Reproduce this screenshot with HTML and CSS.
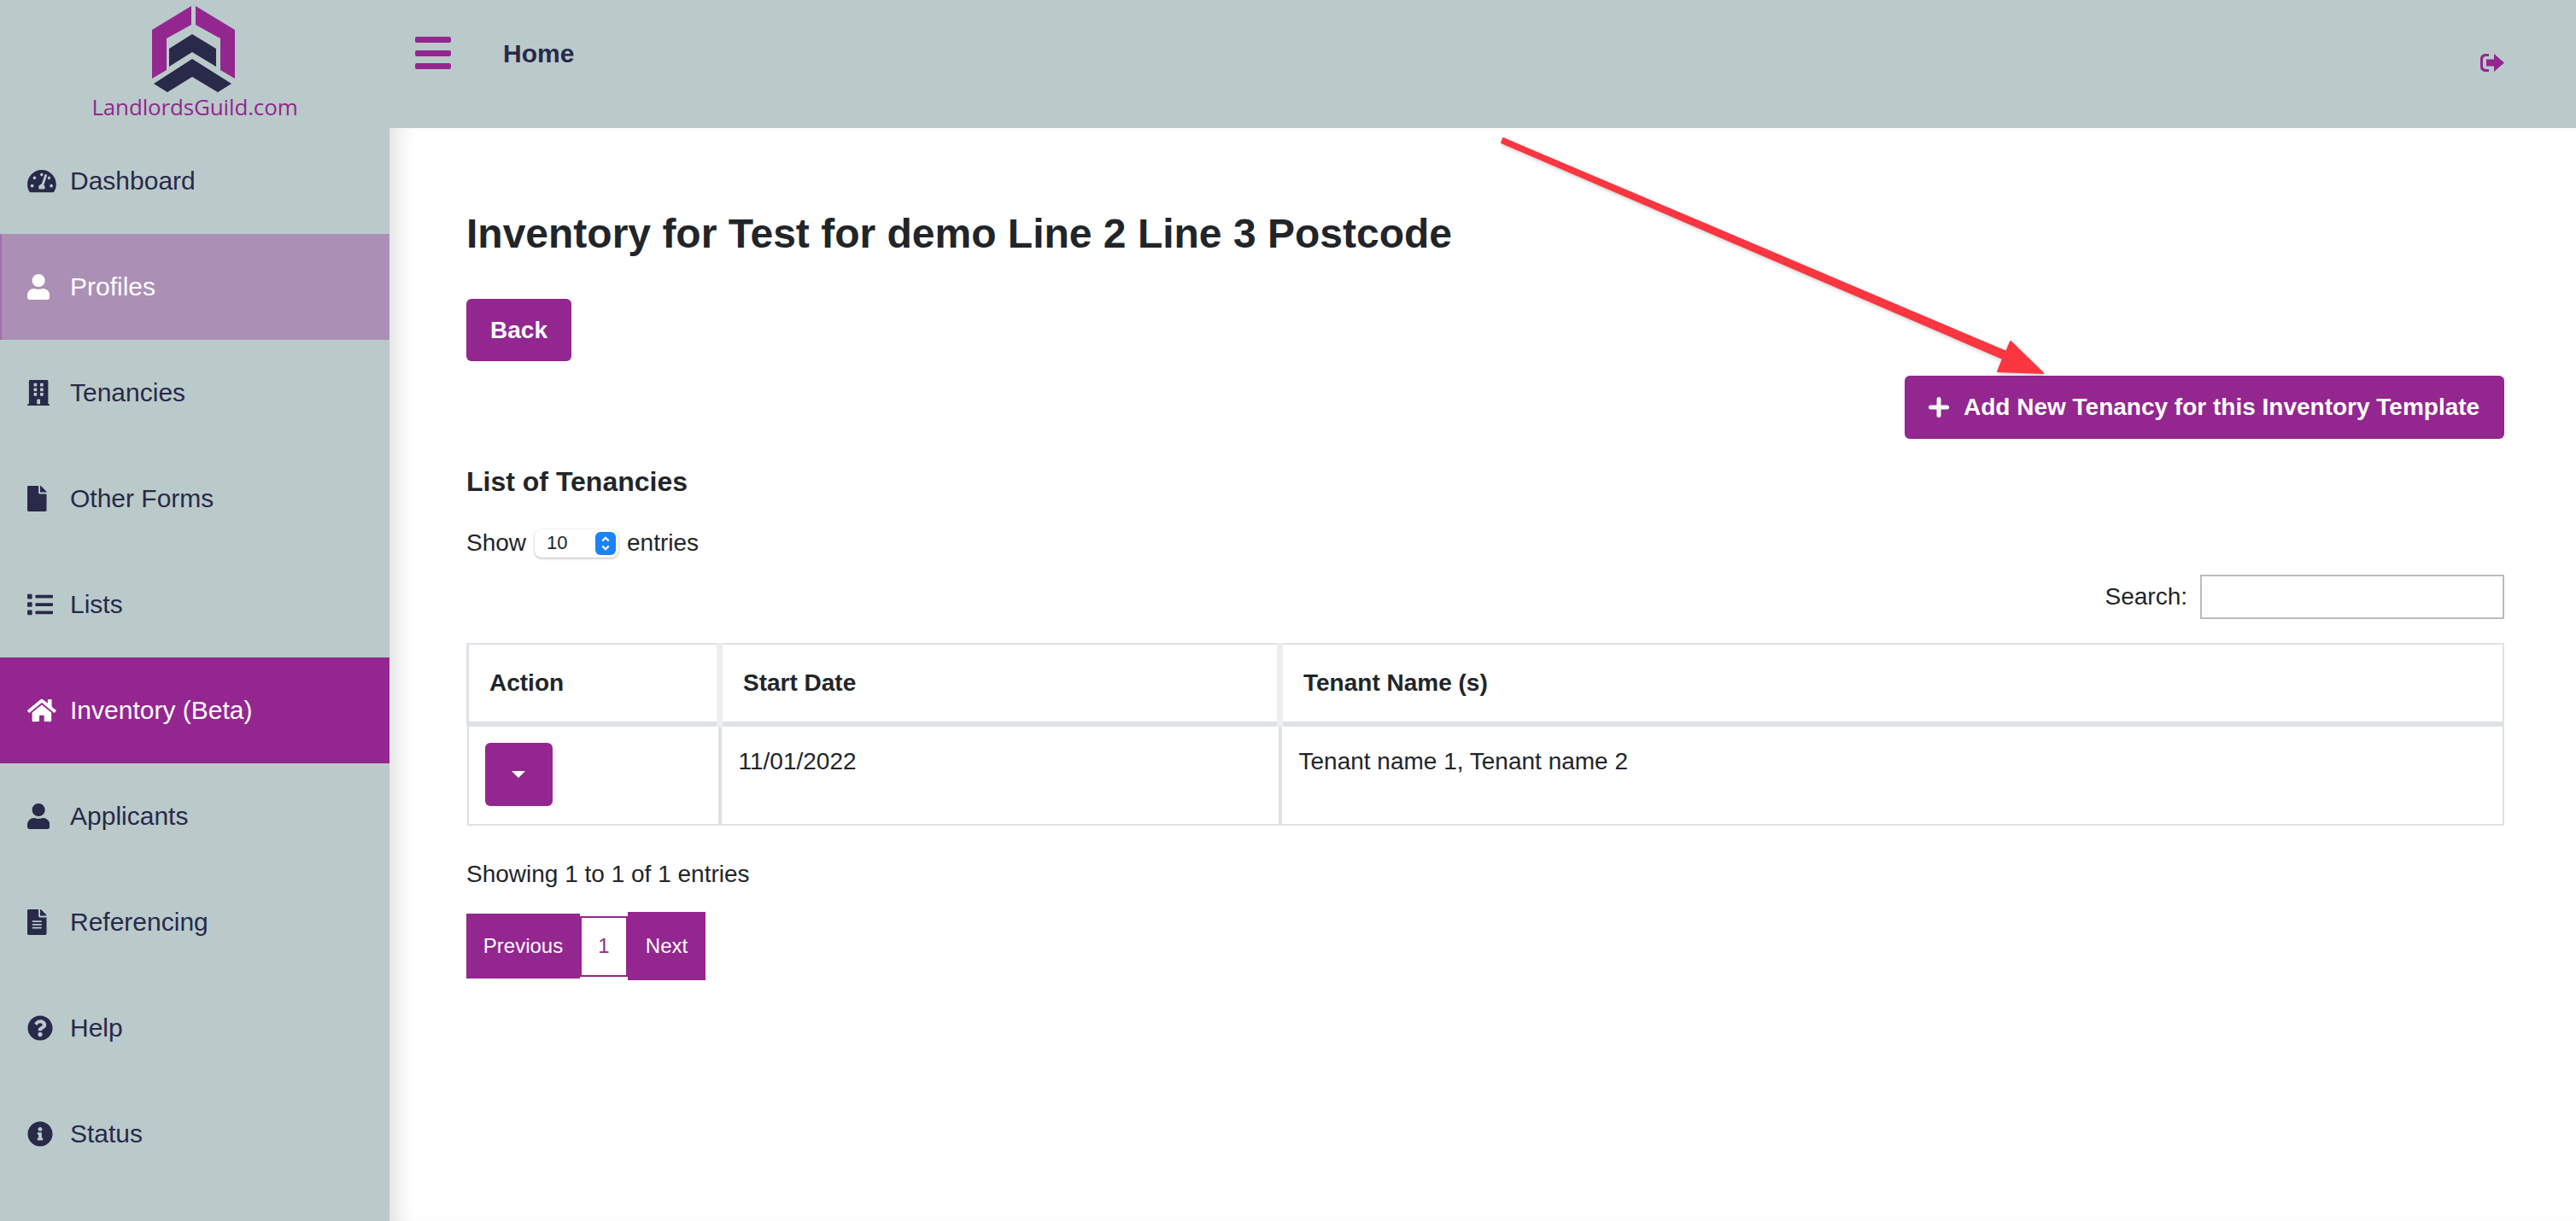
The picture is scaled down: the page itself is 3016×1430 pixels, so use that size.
FILE: index.html
```html
<!DOCTYPE html>
<html lang="en">
<head>
    <meta charset="UTF-8">
    <meta name="viewport" content="width=device-width, initial-scale=1.0">
    <title>Inventory</title>
    <link rel="stylesheet" href="styles.css">
</head>
<body>
    <div class="page">
        <aside class="sidebar">
            <div class="brand">
                <svg class="brand-mark" viewBox="0 0 98 101">
                    <path class="mark-purple" d="M46 0V22L17 38V75L0 85V28Z"/>
                    <path class="mark-purple" d="M51 0L97 28V85L80 75V38L51 22Z"/>
                    <path class="mark-navy" d="M47 33L75 50V71L47 54L20 71V50Z"/>
                    <path class="mark-navy" d="M47 62L93 91L77 101L47 83L18 101L2 91Z"/>
                </svg>
                <div class="brand-name">LandlordsGuild.com</div>
            </div>
            <nav class="nav">
                <a class="nav-item">
                    <span class="nav-icon"><svg viewBox="0 0 576 512"><path d="M288 32C128.94 32 0 160.94 0 320c0 52.8 14.25 102.26 39.06 144.8 5.61 9.62 16.3 15.2 27.44 15.2h443c11.14 0 21.83-5.58 27.44-15.2C561.75 422.26 576 372.8 576 320c0-159.06-128.94-288-288-288zm0 64c14.71 0 26.58 10.13 30.32 23.65-1.11 2.26-2.64 4.23-3.45 6.67l-9.22 27.67c-5.13 3.49-10.97 6.01-17.64 6.01-17.67 0-32-14.33-32-32S270.33 96 288 96zM96 384c-17.67 0-32-14.33-32-32s14.33-32 32-32 32 14.33 32 32-14.33 32-32 32zm48-160c-17.67 0-32-14.33-32-32s14.33-32 32-32 32 14.33 32 32-14.33 32-32 32zm246.77-72.41l-61.33 184C343.13 347.33 352 364.54 352 384c0 11.72-3.38 22.55-8.88 32H232.88c-5.5-9.45-8.88-20.28-8.88-32 0-33.94 26.5-61.43 59.9-63.59l61.34-184.01c4.17-12.56 17.73-19.45 30.36-15.17 12.57 4.19 19.35 17.79 15.17 30.36zm14.66 57.2l15.52-46.55c3.47-1.29 7.13-2.23 11.05-2.23 17.67 0 32 14.33 32 32s-14.33 32-32 32c-11.38-.01-20.89-6.28-26.57-15.22zM480 384c-17.67 0-32-14.33-32-32s14.33-32 32-32 32 14.33 32 32-14.33 32-32 32z"/></svg></span>
                    Dashboard
                </a>
                <a class="nav-item nav-item-hover">
                    <span class="nav-icon"><svg viewBox="0 0 448 512"><path d="M224 256c70.7 0 128-57.3 128-128S294.7 0 224 0 96 57.3 96 128s57.3 128 128 128zm89.6 32h-16.7c-22.2 10.2-46.9 16-72.9 16s-50.6-5.8-72.9-16h-16.7C60.2 288 0 348.2 0 422.4V464c0 26.5 21.5 48 48 48h352c26.5 0 48-21.5 48-48v-41.6c0-74.2-60.2-134.4-134.4-134.4z"/></svg></span>
                    Profiles
                </a>
                <a class="nav-item">
                    <span class="nav-icon"><svg viewBox="0 0 448 512"><path d="M436 480h-20V24c0-13.255-10.745-24-24-24H56C42.745 0 32 10.745 32 24v456H12c-6.627 0-12 5.373-12 12v20h448v-20c0-6.627-5.373-12-12-12zM128 76c0-6.627 5.373-12 12-12h40c6.627 0 12 5.373 12 12v40c0 6.627-5.373 12-12 12h-40c-6.627 0-12-5.373-12-12V76zm0 96c0-6.627 5.373-12 12-12h40c6.627 0 12 5.373 12 12v40c0 6.627-5.373 12-12 12h-40c-6.627 0-12-5.373-12-12v-40zm52 148h-40c-6.627 0-12-5.373-12-12v-40c0-6.627 5.373-12 12-12h40c6.627 0 12 5.373 12 12v40c0 6.627-5.373 12-12 12zm76 160h-64v-84c0-6.627 5.373-12 12-12h40c6.627 0 12 5.373 12 12v84zm64-172c0 6.627-5.373 12-12 12h-40c-6.627 0-12-5.373-12-12v-40c0-6.627 5.373-12 12-12h40c6.627 0 12 5.373 12 12v40zm0-96c0 6.627-5.373 12-12 12h-40c-6.627 0-12-5.373-12-12v-40c0-6.627 5.373-12 12-12h40c6.627 0 12 5.373 12 12v40zm0-96c0 6.627-5.373 12-12 12h-40c-6.627 0-12-5.373-12-12V76c0-6.627 5.373-12 12-12h40c6.627 0 12 5.373 12 12v40z"/></svg></span>
                    Tenancies
                </a>
                <a class="nav-item">
                    <span class="nav-icon"><svg viewBox="0 0 384 512"><path d="M224 136V0H24C10.7 0 0 10.7 0 24v464c0 13.3 10.7 24 24 24h336c13.3 0 24-10.7 24-24V160H248c-13.2 0-24-10.8-24-24zm160-14.1v6.1H256V0h6.1c6.4 0 12.5 2.5 17 7l97.9 98c4.5 4.5 7 10.6 7 16.9z"/></svg></span>
                    Other Forms
                </a>
                <a class="nav-item">
                    <span class="nav-icon"><svg viewBox="0 0 512 512"><path d="M80 368H16a16 16 0 0 0-16 16v64a16 16 0 0 0 16 16h64a16 16 0 0 0 16-16v-64a16 16 0 0 0-16-16zm0-320H16A16 16 0 0 0 0 64v64a16 16 0 0 0 16 16h64a16 16 0 0 0 16-16V64a16 16 0 0 0-16-16zm0 160H16a16 16 0 0 0-16 16v64a16 16 0 0 0 16 16h64a16 16 0 0 0 16-16v-64a16 16 0 0 0-16-16zm416 176H176a16 16 0 0 0-16 16v32a16 16 0 0 0 16 16h320a16 16 0 0 0 16-16v-32a16 16 0 0 0-16-16zm0-320H176a16 16 0 0 0-16 16v32a16 16 0 0 0 16 16h320a16 16 0 0 0 16-16V80a16 16 0 0 0-16-16zm0 160H176a16 16 0 0 0-16 16v32a16 16 0 0 0 16 16h320a16 16 0 0 0 16-16v-32a16 16 0 0 0-16-16z"/></svg></span>
                    Lists
                </a>
                <a class="nav-item nav-item-active">
                    <span class="nav-icon"><svg viewBox="0 0 576 512"><path d="M280.37 148.26L96 300.11V464a16 16 0 0 0 16 16l112.06-.29a16 16 0 0 0 15.92-16V368a16 16 0 0 1 16-16h64a16 16 0 0 1 16 16v95.64a16 16 0 0 0 16 16.05L464 480a16 16 0 0 0 16-16V300L295.67 148.26a12.19 12.19 0 0 0-15.3 0zM571.6 251.47L488 182.56V44.05a12 12 0 0 0-12-12h-56a12 12 0 0 0-12 12v72.61L318.47 43a48 48 0 0 0-61 0L4.34 251.47a12 12 0 0 0-1.6 16.9l25.5 31A12 12 0 0 0 45.15 301l235.22-193.74a12.19 12.19 0 0 1 15.3 0L530.9 301a12 12 0 0 0 16.9-1.6l25.5-31a12 12 0 0 0-1.7-16.93z"/></svg></span>
                    Inventory (Beta)
                </a>
                <a class="nav-item">
                    <span class="nav-icon"><svg viewBox="0 0 448 512"><path d="M224 256c70.7 0 128-57.3 128-128S294.7 0 224 0 96 57.3 96 128s57.3 128 128 128zm89.6 32h-16.7c-22.2 10.2-46.9 16-72.9 16s-50.6-5.8-72.9-16h-16.7C60.2 288 0 348.2 0 422.4V464c0 26.5 21.5 48 48 48h352c26.5 0 48-21.5 48-48v-41.6c0-74.2-60.2-134.4-134.4-134.4z"/></svg></span>
                    Applicants
                </a>
                <a class="nav-item">
                    <span class="nav-icon"><svg viewBox="0 0 384 512"><path d="M224 136V0H24C10.7 0 0 10.7 0 24v464c0 13.3 10.7 24 24 24h336c13.3 0 24-10.7 24-24V160H248c-13.2 0-24-10.8-24-24zm64 236c0 6.6-5.4 12-12 12H108c-6.6 0-12-5.4-12-12v-8c0-6.6 5.4-12 12-12h168c6.6 0 12 5.4 12 12v8zm0-64c0 6.6-5.4 12-12 12H108c-6.6 0-12-5.4-12-12v-8c0-6.6 5.4-12 12-12h168c6.6 0 12 5.4 12 12v8zm0-72v8c0 6.6-5.4 12-12 12H108c-6.6 0-12-5.4-12-12v-8c0-6.6 5.4-12 12-12h168c6.6 0 12 5.4 12 12zm96-114.1v6.1H256V0h6.1c6.4 0 12.5 2.5 17 7l97.9 98c4.5 4.5 7 10.6 7 16.9z"/></svg></span>
                    Referencing
                </a>
                <a class="nav-item">
                    <span class="nav-icon"><svg viewBox="0 0 512 512"><path d="M504 256c0 136.997-111.043 248-248 248S8 392.997 8 256C8 119.083 119.043 8 256 8s248 111.083 248 248zM262.655 90c-54.497 0-89.255 22.957-116.549 63.758-3.536 5.286-2.353 12.415 2.715 16.258l34.699 26.31c5.205 3.947 12.621 3.008 16.665-2.122 17.864-22.658 30.113-35.797 57.303-35.797 20.429 0 45.698 13.148 45.698 32.958 0 14.976-12.363 22.667-32.534 33.976C247.128 238.528 216 254.941 216 296v4c0 6.627 5.373 12 12 12h56c6.627 0 12-5.373 12-12v-1.333c0-28.462 83.186-29.647 83.186-106.667 0-58.002-60.165-102-116.531-102zM256 338c-25.365 0-46 20.635-46 46 0 25.364 20.635 46 46 46s46-20.636 46-46c0-25.365-20.635-46-46-46z"/></svg></span>
                    Help
                </a>
                <a class="nav-item">
                    <span class="nav-icon"><svg viewBox="0 0 512 512"><path d="M256 8C119.043 8 8 119.083 8 256c0 136.997 111.043 248 248 248s248-111.003 248-248C504 119.083 392.957 8 256 8zm0 110c23.196 0 42 18.804 42 42s-18.804 42-42 42-42-18.804-42-42 18.804-42 42-42zm56 254c0 6.627-5.373 12-12 12h-88c-6.627 0-12-5.373-12-12v-24c0-6.627 5.373-12 12-12h12v-64h-12c-6.627 0-12-5.373-12-12v-24c0-6.627 5.373-12 12-12h64c6.627 0 12 5.373 12 12v100h12c6.627 0 12 5.373 12 12v24z"/></svg></span>
                    Status
                </a>
            </nav>
        </aside>

        <div class="main">
            <header class="topbar">
                <div class="topbar-left">
                    <div class="burger"><span></span><span></span><span></span></div>
                    <div class="topbar-title">Home</div>
                </div>
                <svg class="logout" viewBox="0 0 28 21"><path d="M10 0H6C2.5 0 0 2.5 0 6V15C0 18.500 2.500 21 6 21H10V18H6.500C4.500 18 3 16.500 3 14.500V6.500C3 4.500 4.500 3 6.500 3H10Z"/><path d="M7 6.500H16V0L28 10.500L16 21V14.500H7Z"/></svg>
            </header>

            <main class="content">
                <h1 class="page-title">Inventory for Test for demo Line 2 Line 3 Postcode</h1>
                <button class="btn btn-back">Back</button>
                <div class="add-row">
                    <button class="btn btn-add"><svg class="plus" viewBox="0 0 24 24"><path d="M12 2.500V21.500M2.500 12H21.500"/></svg>Add New Tenancy for this Inventory Template</button>
                </div>

                <h2 class="section-title">List of Tenancies</h2>
                <div class="length-row">
                    Show
                    <span class="fake-select">10
                        <span class="select-arrows"><svg viewBox="0 0 24 36"><path d="M7 14L12 9L17 14M7 22L12 27L17 22"/></svg></span>
                    </span>
                    entries
                </div>
                <div class="search-row">
                    <label for="search">Search:</label>
                    <input type="text" id="search">
                </div>

                <table class="data-table">
                    <thead>
                        <tr>
                            <th class="col-action">Action</th>
                            <th class="col-date">Start Date</th>
                            <th>Tenant Name (s)</th>
                        </tr>
                    </thead>
                    <tbody>
                        <tr>
                            <td class="cell-action"><button class="btn-caret"><span class="caret"></span></button></td>
                            <td>11/01/2022</td>
                            <td>Tenant name 1, Tenant name 2</td>
                        </tr>
                    </tbody>
                </table>

                <div class="table-info">Showing 1 to 1 of 1 entries</div>
                <div class="pager">
                    <a class="page-prev">Previous</a>
                    <a class="page-num">1</a>
                    <a class="page-next">Next</a>
                </div>
            </main>
        </div>
    </div>

    <!-- red annotation arrow drawn over the page -->
    <svg class="arrow" viewBox="0 0 3016 1430">
        <path class="arrow-shape" d="M1760 162L2349 412L2354 400L2392 437L2339 435L2345 420L1758 167Z"/>
    </svg>
</body>
</html>
```

FILE: styles.css
```css
* {
    box-sizing: border-box;
}
html, body {
    margin: 0;
    height: 100%;
}
body {
    font-family: "Liberation Sans", Arial, sans-serif;
    font-size: 28px;
    color: #212529;
    background-color: #fff;
    overflow: hidden;
}
.page {
    display: flex;
    height: 1430px;
}

/* sidebar */
.sidebar {
    width: 456px;
    flex-shrink: 0;
    background-color: #bacaca;
}
.brand {
    height: 150px;
    padding-top: 7px;
    display: flex;
    flex-direction: column;
    align-items: center;
}
.brand-mark {
    width: 98px;
    height: 101px;
    display: block;
    margin-left: -2px;
}
.mark-purple {
    fill: #93278f;
}
.mark-navy {
    fill: #29294a;
}
.brand-name {
    font-family: "Open Sans", sans-serif;
    font-size: 26px;
    line-height: 32px;
    margin-top: 1px;
    letter-spacing: -0.15px;
    color: #93278f;
}
.nav-item {
    display: flex;
    align-items: center;
    height: 124px;
    padding-left: 32px;
    font-size: 30px;
    color: #29294a;
}
.nav-icon {
    width: 50px;
    flex-shrink: 0;
    display: flex;
}
.nav-icon svg {
    height: 30px;
    fill: currentColor;
}
.nav-item-hover {
    background-color: #ab8fb4;
    border-left: 2px solid #a56db0;
    padding-left: 30px;
    color: #fff;
}
.nav-item-active {
    background-color: #93278f;
    color: #fff;
}

/* top bar */
.main {
    flex: 1;
    min-width: 0;
    display: flex;
    flex-direction: column;
}
.topbar {
    height: 150px;
    flex-shrink: 0;
    background-color: #bacaca;
    display: flex;
    justify-content: space-between;
    padding: 43px 84px 0 30px;
}
.topbar-left {
    display: flex;
}
.burger {
    width: 42px;
    height: 38px;
    display: flex;
    flex-direction: column;
    justify-content: space-between;
}
.burger span {
    display: block;
    height: 7px;
    background-color: #93278f;
    border-radius: 2px;
}
.topbar-title {
    margin-left: 61px;
    font-size: 30px;
    font-weight: bold;
    line-height: 34px;
    margin-top: 3px;
    color: #29294a;
}
.logout {
    width: 28px;
    height: 21px;
    margin-top: 20px;
    fill: #93278f;
}

/* content */
.content {
    flex: 1;
    padding: 95px 84px 0 90px;
    box-shadow: inset 22px 0 22px -14px rgba(0, 0, 0, 0.13);
}
.page-title {
    margin: 0;
    font-size: 48px;
    line-height: 58px;
    font-weight: bold;
}
.btn {
    display: block;
    border: none;
    border-radius: 6px;
    background-color: #93278f;
    color: #fff;
    font-family: inherit;
    font-size: 28px;
    font-weight: bold;
}
.btn-back {
    width: 123px;
    height: 73px;
    margin-top: 47px;
}
.add-row {
    display: flex;
    justify-content: flex-end;
    margin-top: 17px;
}
.btn-add {
    width: 702px;
    height: 74px;
    display: flex;
    align-items: center;
    padding-left: 28px;
}
.plus {
    width: 24px;
    height: 24px;
    margin-right: 17px;
    fill: none;
    stroke: #fff;
    stroke-width: 5;
    stroke-linecap: round;
}
.section-title {
    margin: 31px 0 0;
    font-size: 32px;
    line-height: 38px;
    font-weight: bold;
}
.length-row {
    display: flex;
    align-items: center;
    gap: 10px;
    margin-top: 35px;
    height: 36px;
}
.fake-select {
    width: 98px;
    height: 33px;
    border-radius: 8px;
    background-color: #fff;
    box-shadow: 0 1px 3px rgba(0, 0, 0, 0.3);
    font-size: 22px;
    padding-left: 14px;
    display: flex;
    align-items: center;
    justify-content: space-between;
}
.select-arrows {
    width: 24px;
    height: 27px;
    margin-right: 3px;
    border-radius: 6px;
    background-color: #1b82fb;
    display: flex;
}
.select-arrows svg {
    width: 24px;
    height: 27px;
    fill: none;
    stroke: #fff;
    stroke-width: 3;
}
.search-row {
    display: flex;
    justify-content: flex-end;
    align-items: center;
    gap: 15px;
    margin-top: 19px;
}
.search-row input {
    width: 356px;
    height: 52px;
    border: 2px solid #bbb;
    background-color: #fff;
}
.data-table {
    width: 100%;
    margin-top: 28px;
    border-collapse: collapse;
    table-layout: fixed;
}
.data-table th {
    height: 94px;
    padding: 0 24px;
    text-align: left;
    font-size: 28px;
    border: 2px solid #dee2e6;
    border-bottom-width: 6px;
    border-left: 7px solid #eee;
    border-right: 7px solid #eee;
    border-top: 2px solid #dee2e6;
}
.data-table th:first-child {
    border-left: 3px solid #dee2e6;
}
.data-table th:last-child {
    border-right: 2px solid #dee2e6;
}
.data-table td {
    height: 118px;
    padding: 25px 20px 0;
    vertical-align: top;
    border: 4px solid #dee2e6;
    border-top: 6px solid #dee2e6;
    border-bottom: 2px solid #dee2e6;
}
.data-table td:first-child {
    border-left: 2px solid #dee2e6;
}
.data-table td:last-child {
    border-right: 2px solid #dee2e6;
}
.col-action {
    width: 295px;
}
.col-date {
    width: 656px;
}
.data-table td.cell-action {
    padding: 19px 0 0 19px;
}
.btn-caret {
    display: flex;
    align-items: center;
    justify-content: center;
    width: 79px;
    height: 74px;
    border: none;
    border-radius: 6px;
    background-color: #93278f;
    padding: 0;
}
.caret {
    width: 0;
    height: 0;
    border-left: 8px solid transparent;
    border-right: 8px solid transparent;
    border-top: 8px solid #fff;
}
.table-info {
    margin-top: 40px;
    line-height: 34px;
}
.pager {
    display: flex;
    align-items: center;
    margin-top: 27px;
    font-size: 24px;
}
.pager a {
    display: flex;
    align-items: center;
    justify-content: center;
}
.page-prev {
    width: 133px;
    height: 76px;
    background-color: #93278f;
    color: #fff;
}
.page-num {
    width: 56px;
    height: 71px;
    border: 2px solid #93278f;
    color: #93278f;
}
.page-next {
    width: 91px;
    height: 80px;
    background-color: #93278f;
    color: #fff;
}

/* annotation */
.arrow {
    position: absolute;
    left: 0;
    top: 0;
    width: 3016px;
    height: 1430px;
    z-index: 2;
    pointer-events: none;
}
.arrow-shape {
    fill: #fb3640;
    stroke: #fb3640;
    stroke-width: 2;
    stroke-linejoin: round;
    filter: drop-shadow(1px 2px 2px rgba(0, 0, 0, 0.2));
}
```
